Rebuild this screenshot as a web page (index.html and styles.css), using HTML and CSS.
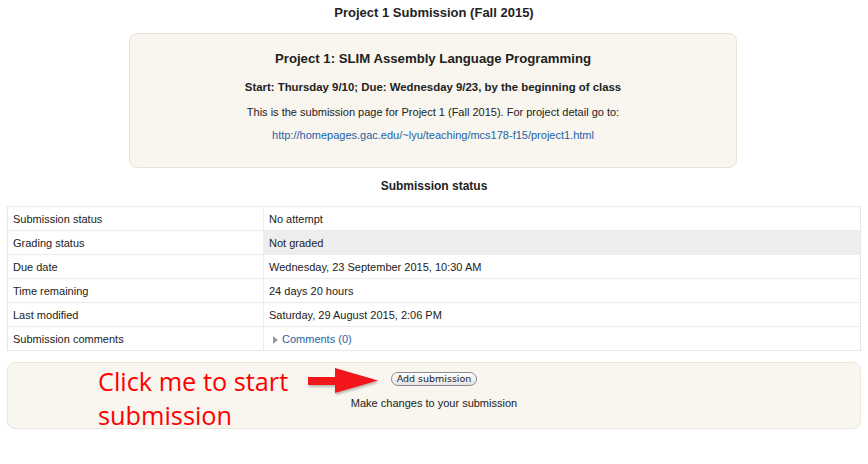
FILE: index.html
```html
<!DOCTYPE html>
<html>
<head>
<meta charset="utf-8">
<title>Project 1 Submission (Fall 2015)</title>
<link rel="stylesheet" href="styles.css">
</head>
<body>
<div class="page">
  <h2 class="page-title">Project 1 Submission (Fall 2015)</h2>
  <div class="intro">
    <h3 class="intro-title">Project 1: SLIM Assembly Language Programming</h3>
    <p class="intro-dates">Start: Thursday 9/10; Due: Wednesday 9/23, by the beginning of class</p>
    <p class="intro-text">This is the submission page for Project 1 (Fall 2015). For project detail go to:</p>
    <p class="intro-link"><a href="#">http://homepages.gac.edu/~lyu/teaching/mcs178-f15/project1.html</a></p>
  </div>
  <h3 class="status-title">Submission status</h3>
  <table class="status">
    <tr><td class="c0">Submission status</td><td class="c1">No attempt</td></tr>
    <tr><td class="c0">Grading status</td><td class="c1 shaded">Not graded</td></tr>
    <tr><td class="c0">Due date</td><td class="c1">Wednesday, 23 September 2015, 10:30 AM</td></tr>
    <tr><td class="c0">Time remaining</td><td class="c1">24 days 20 hours</td></tr>
    <tr><td class="c0">Last modified</td><td class="c1">Saturday, 29 August 2015, 2:06 PM</td></tr>
    <tr><td class="c0">Submission comments</td><td class="c1"><span class="tri"></span><a href="#" class="comments">Comments (0)</a></td></tr>
  </table>
  <div class="action">
    <button class="add-btn" type="button">Add submission</button>
    <div class="action-note">Make changes to your submission</div>
    <div class="callout">Click me to start<br>submission</div>
    <svg class="arrow" width="72" height="26" viewBox="0 0 72 26">
      <path d="M1 9 H28 V0 L71 12.5 L28 25 V17 H1 Z" fill="#f2161b"/>
    </svg>
  </div>
</div>
</body>
</html>
```
FILE: styles.css
```css
html, body {
  margin: 0;
  padding: 0;
  background: #fff;
}
body {
  font-family: "Liberation Sans", Arial, Helvetica, sans-serif;
  color: #222;
  font-size: 11px;
}
.page {
  width: 854px;
  padding: 4px 7px 0 7px;
}
.page-title {
  margin: 0;
  font-size: 13px;
  line-height: 18px;
  font-weight: bold;
  text-align: center;
}
.intro {
  width: 606px;
  margin: 11px 0 0 122px;
  background: #f8f6ee;
  border: 1px solid #e8e4d8;
  border-radius: 8px;
  padding: 15px 0 25px 0;
  text-align: center;
}
.intro-title {
  margin: 0;
  font-size: 13.2px;
  line-height: 20px;
  font-weight: bold;
}
.intro-dates {
  margin: 10px 0 0 0;
  font-size: 11.4px;
  line-height: 16px;
  font-weight: bold;
}
.intro-text {
  margin: 10px 0 0 0;
  font-size: 11px;
  line-height: 14px;
}
.intro-link {
  margin: 9px 0 0 0;
  font-size: 11px;
  line-height: 14px;
}
a {
  color: #2561a8;
  text-decoration: none;
}
.status-title {
  margin: 10px 0 0 0;
  font-size: 12px;
  line-height: 16px;
  font-weight: bold;
  text-align: center;
}
.status {
  margin-top: 12px;
  width: 854px;
  border-collapse: collapse;
  border: 1px solid #e6e6e6;
}
.status td {
  height: 23px;
  padding: 0 5px;
  border-top: 1px solid #ececec;
  font-size: 11px;
  line-height: 14px;
  vertical-align: middle;
}
.status td.c0 {
  width: 245px;
  border-right: 1px solid #ececec;
}
.status td.shaded {
  background: #eeeeee;
}
.tri {
  display: inline-block;
  width: 0;
  height: 0;
  border-top: 4px solid transparent;
  border-bottom: 4px solid transparent;
  border-left: 5px solid #999;
  margin: 0 4px 0 4px;
  vertical-align: -1px;
}
.action {
  position: relative;
  margin-top: 11px;
  height: 38px;
  background: #f8f6ee;
  border: 1px solid #ebe7dc;
  border-radius: 8px;
  padding: 9px 0 18px 0;
  text-align: center;
}
.add-btn {
  display: block;
  margin: 0 auto;
  width: 86px;
  height: 14px;
  padding: 0;
  border: 1px solid #8c8c8c;
  border-radius: 8px;
  background: linear-gradient(#ffffff, #e4e4e4);
  font-family: "DejaVu Sans", "Liberation Sans", sans-serif;
  font-size: 9.5px;
  line-height: 12px;
  color: #222;
}
.action-note {
  margin-top: 10px;
  font-size: 11px;
  line-height: 14px;
}
.callout {
  position: absolute;
  left: 90px;
  top: 1px;
  text-align: left;
  color: #ff0000;
  font-family: "Open Sans", "Liberation Sans", sans-serif;
  font-size: 25.3px;
  line-height: 34px;
}
.arrow {
  position: absolute;
  left: 299px;
  top: 5px;
  filter: drop-shadow(1px 2px 1px rgba(0,0,0,0.25));
}
```
